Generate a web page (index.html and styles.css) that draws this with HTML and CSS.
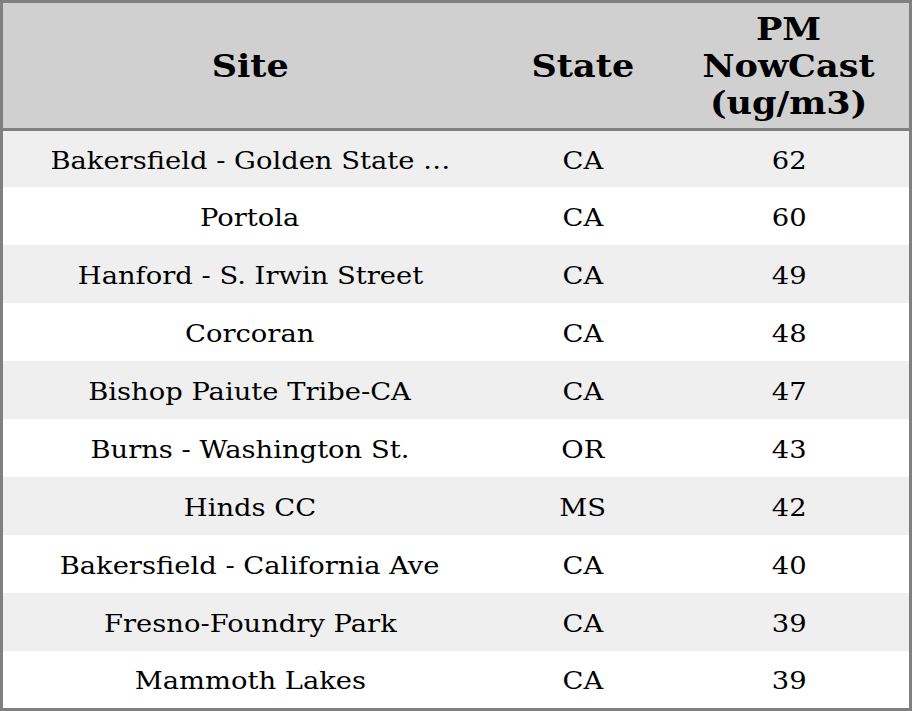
FILE: index.html
```html
<!DOCTYPE html>
<html>
<head>
<meta charset="utf-8">
<link rel="stylesheet" href="styles.css">
</head>
<body>
<div class="table">
  <div class="row head">
    <div class="cell"><span class="txt">Site</span></div>
    <div class="cell"><span class="txt">State</span></div>
    <div class="cell"><span class="txt">PM<br>NowCast<br>(ug/m3)</span></div>
  </div>
  <div class="row odd first"><div class="cell"><span class="txt">Bakersfield - Golden State …</span></div><div class="cell"><span class="txt">CA</span></div><div class="cell"><span class="txt">62</span></div></div>
  <div class="row"><div class="cell"><span class="txt">Portola</span></div><div class="cell"><span class="txt">CA</span></div><div class="cell"><span class="txt">60</span></div></div>
  <div class="row odd"><div class="cell"><span class="txt">Hanford - S. Irwin Street</span></div><div class="cell"><span class="txt">CA</span></div><div class="cell"><span class="txt">49</span></div></div>
  <div class="row"><div class="cell"><span class="txt">Corcoran</span></div><div class="cell"><span class="txt">CA</span></div><div class="cell"><span class="txt">48</span></div></div>
  <div class="row odd"><div class="cell"><span class="txt">Bishop Paiute Tribe-CA</span></div><div class="cell"><span class="txt">CA</span></div><div class="cell"><span class="txt">47</span></div></div>
  <div class="row"><div class="cell"><span class="txt">Burns - Washington St.</span></div><div class="cell"><span class="txt">OR</span></div><div class="cell"><span class="txt">43</span></div></div>
  <div class="row odd"><div class="cell"><span class="txt">Hinds CC</span></div><div class="cell"><span class="txt">MS</span></div><div class="cell"><span class="txt">42</span></div></div>
  <div class="row"><div class="cell"><span class="txt">Bakersfield - California Ave</span></div><div class="cell"><span class="txt">CA</span></div><div class="cell"><span class="txt">40</span></div></div>
  <div class="row odd"><div class="cell"><span class="txt">Fresno-Foundry Park</span></div><div class="cell"><span class="txt">CA</span></div><div class="cell"><span class="txt">39</span></div></div>
  <div class="row last"><div class="cell"><span class="txt">Mammoth Lakes</span></div><div class="cell"><span class="txt">CA</span></div><div class="cell"><span class="txt">39</span></div></div>
</div>
</body>
</html>
```
FILE: styles.css
```css
html, body {
  margin: 0;
  padding: 0;
  background: #ffffff;
}
.table {
  width: 912px;
  height: 711px;
  box-sizing: border-box;
  border: 3px solid #808080;
  overflow: hidden;
  font-family: "DejaVu Serif", serif;
  color: #000;
  background: #fff;
}
.row {
  display: grid;
  grid-template-columns: 494px 172px 240px;
  height: 58px;
  font-size: 24px;
  align-items: center;
  text-align: center;
}
.row .txt {
  display: inline-block;
  transform: scaleX(1.14);
  padding-top: 3px;
}
.row.first {
  height: 56px;
}
.row.last {
  height: 57px;
}
.row.head {
  height: 125px;
  background: #d0d0d0;
  border-bottom: 3px solid #808080;
  font-size: 32px;
  font-weight: bold;
  line-height: 37px;
}
.row.head .txt {
  transform: scaleX(1.095);
  padding-top: 1px;
}
.row.odd {
  background: #efefef;
}
.cell {
  white-space: nowrap;
  overflow: hidden;
}
```
